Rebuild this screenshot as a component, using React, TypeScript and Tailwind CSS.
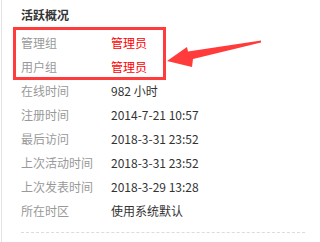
const rows: { label: string; value: string; red?: boolean }[] = [
  { label: "管理组", value: "管理员", red: true },
  { label: "用户组", value: "管理员", red: true },
  { label: "在线时间", value: "982 小时" },
  { label: "注册时间", value: "2014-7-21 10:57" },
  { label: "最后访问", value: "2018-3-31 23:52" },
  { label: "上次活动时间", value: "2018-3-31 23:52" },
  { label: "上次发表时间", value: "2018-3-29 13:28" },
  { label: "所在时区", value: "使用系统默认" },
];

export default function App() {
  return (
    <div
      className="relative w-[305px] h-[242px] overflow-hidden bg-white"
      style={{ fontFamily: '"Noto Sans CJK SC", "Liberation Sans", sans-serif' }}
    >
      <div className="ml-px h-full border-l border-[#e4e4e4] pl-[19px] pt-[6px]">
        {/* Section title */}
        <h2 className="text-[12px] leading-[18px] font-bold text-[#333]">活跃概况</h2>

        {/* Stats list */}
        <ul className="mt-[7px]">
          {rows.map((r) => (
            <li key={r.label} className="flex h-[24px] items-center text-[12px]">
              <span className="w-[90px] shrink-0 text-[#999]">{r.label}</span>
              <span className={r.red ? "text-[#ff0000]" : "text-[#333]"}>{r.value}</span>
            </li>
          ))}
        </ul>

        <div className="mt-[9px] border-t border-dashed border-[#dcdcdc]" />
      </div>

      {/* Annotation: red box + arrow */}
      <div className="absolute left-[13px] top-[27px] w-[153px] h-[53px] border-[3px] border-[#ff3b3b]" />
      <svg className="absolute left-0 top-0" width="305" height="242" viewBox="0 0 305 242">
        <polygon
          points="167,61 187,47 188,51.5 261,40.5 261,42.5 193,59 192,67"
          fill="#ff3b3b"
        />
      </svg>
    </div>
  );
}
